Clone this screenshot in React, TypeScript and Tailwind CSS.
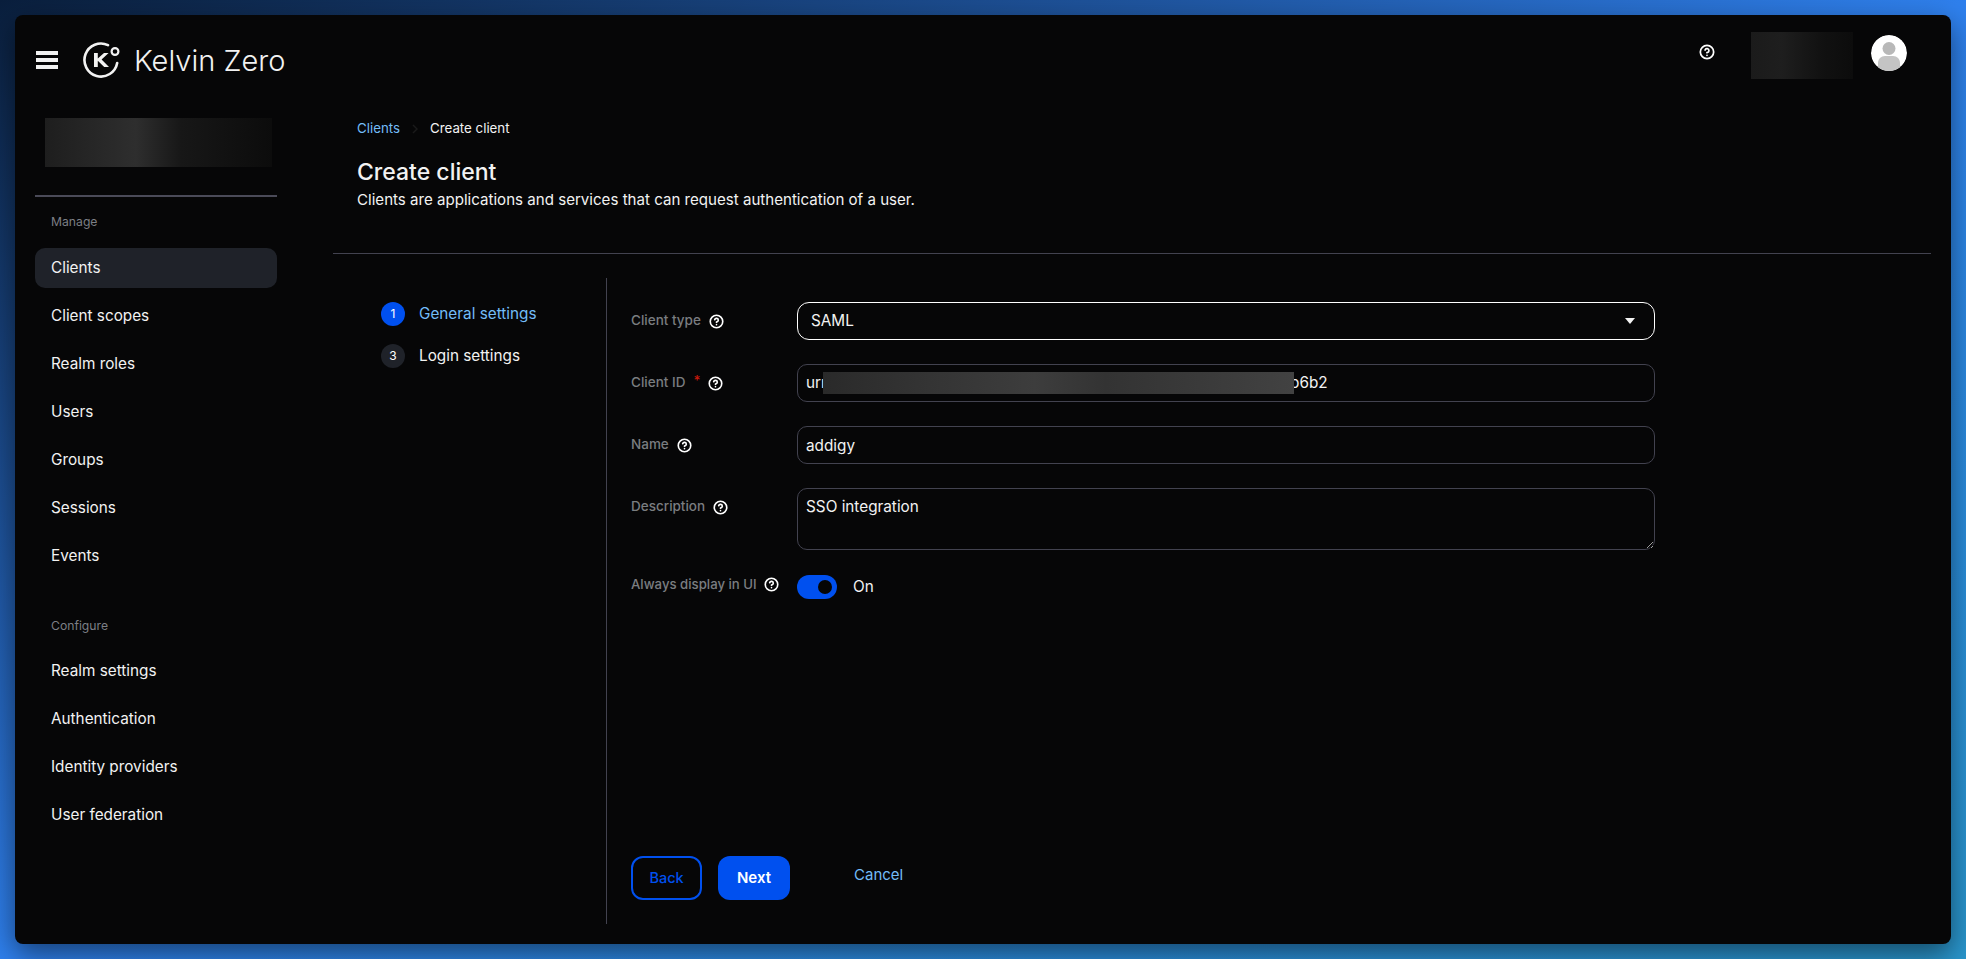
import React from 'react';
import {CircleHelp} from "lucide-react";

const manageItems = ["Clients", "Client scopes", "Realm roles", "Users", "Groups", "Sessions", "Events"];
const configureItems = ["Realm settings", "Authentication", "Identity providers", "User federation"];

function Help({className = ""}: {className?: string}) {
    return <CircleHelp size={15} strokeWidth={2.6} className={"text-white shrink-0 " + className}/>;
}

function Logo() {
    return (
        <svg width="37" height="36" viewBox="0 0 37 36" fill="none" stroke="#f2f2f2" className="shrink-0">
            <path d="M25 3.1A16.5 16.5 0 1 0 34.2 21" strokeWidth="2.6" strokeLinecap="round"/>
            <circle cx="32" cy="9.5" r="3.4" strokeWidth="2.2"/>
            <path d="M11 11h3.8v5.6L21 11h4.6l-7 6.6 7.4 7.4h-4.8l-6.4-6.2V25H11z" fill="#f2f2f2" stroke="none"/>
        </svg>
    );
}

function Avatar() {
    return (
        <svg width="36" height="36" viewBox="0 0 36 36" className="mt-[3px] rounded-full shrink-0">
            <circle cx="18" cy="18" r="18" fill="#fff"/>
            <circle cx="18" cy="13.5" r="6.5" fill="#b8b8b8"/>
            <path d="M7 36v-8c0-4 3-7 7-7h8c4 0 7 3 7 7v8z" fill="#c4c4c4"/>
        </svg>
    );
}

function NavItem({label, active}: {label: string; active?: boolean}) {
    return (
        <div className={"h-10 mb-2 px-4 rounded-[10px] flex items-center text-[15.3px] text-[#f2f2f2] " + (active ? "bg-[#1f2229]" : "")}>
            {label}
        </div>
    );
}

function Sidebar() {
    return (
        <aside className="w-[318px] shrink-0 pl-5 pr-14 pt-[13px]">
            <div className="mx-[10px] w-[227px] h-[49px] bg-[linear-gradient(90deg,#1e1e1e,#2e2e2e_40%,#171717_60%,#0c0c0c)]"/>
            <div className="h-[2px] mt-7 bg-[#4a4a58]"/>
            <div className="px-4 mt-[17px] mb-[18px] h-4 flex items-center text-[12.2px] text-[#7c7f85]">Manage</div>
            {manageItems.map((item) => <NavItem key={item} label={item} active={item === "Clients"}/>)}
            <div className="px-4 mt-[42px] mb-[17px] h-4 flex items-center text-[12.2px] text-[#7c7f85]">Configure</div>
            {configureItems.map((item) => <NavItem key={item} label={item}/>)}
        </aside>
    );
}

function Step({num, label, active}: {num: number; label: string; active?: boolean}) {
    return (
        <div className="flex items-center gap-[14px] h-6 mb-[18px]">
            <div className={"w-6 h-6 rounded-full flex items-center justify-center text-xs text-white " + (active ? "bg-[#0050ef]" : "bg-[#1f2229]")}>{num}</div>
            <span className={"text-[15.3px] " + (active ? "text-[#73bcf7]" : "text-[#f2f2f2]")}>{label}</span>
        </div>
    );
}

function Row({label, required, children}: {label: string; required?: boolean; children: React.ReactNode}) {
    return (
        <div className="flex items-start">
            <div className="w-[166px] shrink-0 h-[36px] flex items-center text-[13.5px] font-medium text-[#7a7d80] whitespace-nowrap">
                {label}
                {required && <span className="ml-[8px] -mt-1 text-[#c9190b]">*</span>}
                <Help className="ml-[8px] mt-[3px]"/>
            </div>
            {children}
        </div>
    );
}

const fieldClass = "w-[858px] h-[38px] px-2 rounded-[10px] border border-[#42424f] bg-transparent text-[15.3px] text-[#f2f2f2] flex items-center outline-none";

function Form() {
    return (
        <div className="flex-1 border-l border-[#42424f] pl-6 pt-6 pb-6 flex flex-col">
            <div className="flex flex-col gap-6">
                <Row label="Client type">
                    <div className="w-[858px] h-[38px] pl-[13px] pr-[19px] rounded-[12px] border-[1.5px] border-white text-[15.3px] text-[#f2f2f2] flex items-center justify-between">
                        SAML
                        <svg width="10" height="6" viewBox="0 0 10 6"><path d="M0 0h10L5 6z" fill="#f2f2f2"/></svg>
                    </div>
                </Row>
                <Row label="Client ID" required>
                    <div className={fieldClass}>
                        <span>urn</span>
                        <div className="relative z-10 shrink-0 w-[471px] h-[22px] -ml-[7px] -mr-1 bg-[linear-gradient(90deg,#2a2a2a,#333333_20%,#3d3d3d_45%,#333333_60%,#3a3a3a_80%,#424242)]"/>
                        <span>b6b2</span>
                    </div>
                </Row>
                <Row label="Name">
                    <input className={fieldClass} defaultValue="addigy" readOnly/>
                </Row>
                <Row label="Description">
                    <textarea className="w-[858px] h-[62px] px-2 py-[7px] rounded-[10px] border border-[#42424f] bg-transparent text-[15.3px] text-[#f2f2f2] outline-none resize-y" defaultValue="SSO integration" readOnly/>
                </Row>
                <div className="flex items-center mt-px">
                    <div className="w-[166px] shrink-0 -mt-1 flex items-center text-[13.2px] font-medium text-[#7a7d80] whitespace-nowrap">
                        Always display in UI
                        <Help className="ml-[7px]"/>
                    </div>
                    <div className="w-10 h-6 rounded-full bg-[#0050ef] flex items-center justify-end pr-[5px]">
                        <div className="w-[14px] h-[14px] rounded-full bg-[#050505]"/>
                    </div>
                    <span className="ml-4 text-[15.3px] text-[#f2f2f2]">On</span>
                </div>
            </div>
            <div className="mt-auto flex items-start">
                <button className="w-[71px] h-11 rounded-[12px] border-2 border-[#0050ef] text-[14.5px] font-medium text-[#0050ef]">Back</button>
                <button className="ml-4 w-[72px] h-11 rounded-[12px] bg-[#0050ef] text-[15px] font-semibold text-white">Next</button>
                <button className="ml-16 mt-2 text-[15px] text-[#73bcf7]">Cancel</button>
            </div>
        </div>
    );
}

function App(): React.ReactElement {
    return (
        <div className="h-[959px] p-[15px] bg-gradient-to-br from-[#0a1f3d] via-[#2f80ed] to-[#2a96cc] font-['Inter',sans-serif] overflow-hidden">
            <div className="h-[929px] rounded-[8px] bg-[#060607] shadow-[0_10px_28px_rgba(0,0,0,0.5)] flex flex-col">
                <header className="h-[90px] shrink-0 pl-[21px] pr-[44px] flex items-center justify-between">
                    <div className="flex items-center">
                        <div className="w-[22px] flex flex-col gap-[3px]">
                            <div className="h-1 bg-[#f2f2f2]"/>
                            <div className="h-1 bg-[#f2f2f2]"/>
                            <div className="h-1 bg-[#f2f2f2]"/>
                        </div>
                        <div className="ml-[25px]"><Logo/></div>
                        <span className="ml-[14px] text-[29px] font-light text-[#f2f2f2] leading-none">Kelvin Zero</span>
                    </div>
                    <div className="self-start pt-[17px] flex items-start">
                        <CircleHelp size={16} strokeWidth={2.6} className="text-white mt-3"/>
                        <div className="ml-9 mr-[18px] w-[102px] h-[47px] bg-[linear-gradient(90deg,#1b1b1b,#1e1e1e_30%,#111111_70%,#0c0c0c)]"/>
                        <Avatar/>
                    </div>
                </header>
                <div className="flex-1 flex min-h-0">
                    <Sidebar/>
                    <main className="flex-1 pr-5 pt-[14px] flex flex-col">
                        <div className="pl-6">
                            <nav className="h-5 flex items-center text-[13.3px]">
                                <span className="text-[#73bcf7]">Clients</span>
                                <svg width="6" height="10" viewBox="0 0 6 10" className="mx-3" fill="none" stroke="#1a1a1a" strokeWidth="1.5"><path d="M1 1l4 4-4 4"/></svg>
                                <span className="text-[#f2f2f2]">Create client</span>
                            </nav>
                            <h1 className="mt-[17px] text-[23px] leading-8 font-medium text-[#f2f2f2]">Create client</h1>
                            <p className="text-[15.1px] leading-6 text-[#f2f2f2]">Clients are applications and services that can request authentication of a user.</p>
                        </div>
                        <div className="h-px mt-[41px] bg-[#42424f]"/>
                        <div className="flex-1 flex mt-6 mb-5">
                            <div className="w-[273px] shrink-0 pl-12 pt-6">
                                <Step num={1} label="General settings" active/>
                                <Step num={3} label="Login settings"/>
                            </div>
                            <Form/>
                        </div>
                    </main>
                </div>
            </div>
        </div>
    );
}

export default App;
